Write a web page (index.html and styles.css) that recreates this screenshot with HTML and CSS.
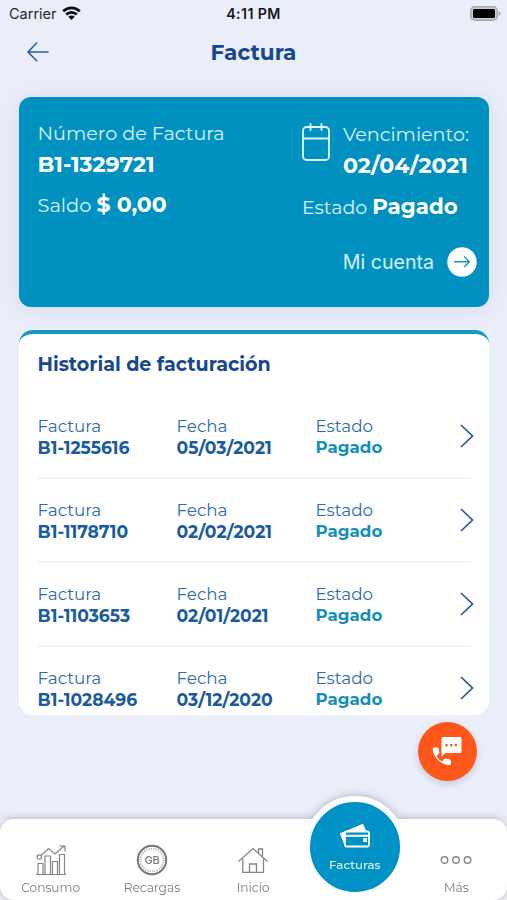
FILE: index.html
```html
<!DOCTYPE html>
<html lang="es">
<head>
  <meta charset="UTF-8">
  <meta name="viewport" content="width=device-width, initial-scale=1.0">
  <title>Factura</title>
  <link rel="stylesheet" href="styles.css">
</head>
<body>
  <div class="app">
    <div class="status-bar">
      <div class="carrier">
        <span>Carrier</span>
        <svg width="19" height="15" viewBox="0 0 19 15" fill="none" stroke="#0b0d12" stroke-width="2.7">
          <path d="M1.2 5.3a11.8 11.8 0 0 1 16.6 0"/>
          <path d="M4.2 8.5a7.5 7.5 0 0 1 10.6 0"/>
          <path d="M9.5 14 6.3 10.8a4.6 4.6 0 0 1 6.4 0z" fill="#0b0d12" stroke="none"/>
        </svg>
      </div>
      <span class="clock">4:11 PM</span>
      <svg class="battery" width="31" height="15" viewBox="0 0 31 15">
        <rect x=".8" y=".8" width="26.4" height="13.4" rx="4" fill="#c9ccd2" stroke="#a5a7ac" stroke-width="1.4"/>
        <rect x="3" y="3" width="22" height="9" rx="1.5" fill="#000"/>
        <path d="M28.6 5v5q2-.8 2-2.5T28.6 5z" fill="#a5a7ac"/>
      </svg>
    </div>

    <header class="header">
      <svg width="22" height="20" viewBox="0 0 22 20" fill="none" stroke="#2c5a9d" stroke-width="1.6" stroke-linecap="round" stroke-linejoin="round">
        <path d="M21 10H1M9.7 1 1 10l8.7 8.7"/>
      </svg>
      <h1>Factura</h1>
    </header>

    <section class="summary">
      <div class="summary-left">
        <p class="label">Número de Factura</p>
        <p class="value">B1-1329721</p>
        <p class="line balance">Saldo <b>$ 0,00</b></p>
      </div>
      <div class="summary-right">
        <div class="due">
          <svg width="28" height="38" viewBox="0 0 28 38" fill="none" stroke="#e2f6fc" stroke-width="1.8" stroke-linecap="round">
            <rect x="1" y="4" width="26" height="33" rx="3.5"/>
            <path d="M1 15.5h26M8.5 1v6M19.5 1v6"/>
          </svg>
          <div>
            <p class="label">Vencimiento:</p>
            <p class="value">02/04/2021</p>
          </div>
        </div>
        <p class="line">Estado <b>Pagado</b></p>
        <a class="account" href="#">
          <span>Mi cuenta</span>
          <svg width="30" height="30" viewBox="0 0 30 30" fill="none" stroke="#2492bd" stroke-width="1.4" stroke-linecap="round" stroke-linejoin="round">
            <circle cx="15" cy="15" r="14.7" fill="#fff" stroke="none"/>
            <path d="M7.5 14.7h15M17.7 10l4.800 4.700-4.800 4.700"/>
          </svg>
        </a>
      </div>
    </section>

    <section class="history">
      <h2>Historial de facturación</h2>
      <ul>
        <li>
          <div class="cell"><span>Factura</span><b>B1-1255616</b></div>
          <div class="cell"><span>Fecha</span><b>05/03/2021</b></div>
          <div class="cell"><span>Estado</span><b class="paid">Pagado</b></div>
          <svg class="chevron" viewBox="0 0 14 24"><path d="M1.5 1.5 12.5 12l-11 10.5"/></svg>
        </li>
        <li>
          <div class="cell"><span>Factura</span><b>B1-1178710</b></div>
          <div class="cell"><span>Fecha</span><b>02/02/2021</b></div>
          <div class="cell"><span>Estado</span><b class="paid">Pagado</b></div>
          <svg class="chevron" viewBox="0 0 14 24"><path d="M1.5 1.5 12.5 12l-11 10.5"/></svg>
        </li>
        <li>
          <div class="cell"><span>Factura</span><b>B1-1103653</b></div>
          <div class="cell"><span>Fecha</span><b>02/01/2021</b></div>
          <div class="cell"><span>Estado</span><b class="paid">Pagado</b></div>
          <svg class="chevron" viewBox="0 0 14 24"><path d="M1.5 1.5 12.5 12l-11 10.5"/></svg>
        </li>
        <li>
          <div class="cell"><span>Factura</span><b>B1-1028496</b></div>
          <div class="cell"><span>Fecha</span><b>03/12/2020</b></div>
          <div class="cell"><span>Estado</span><b class="paid">Pagado</b></div>
          <svg class="chevron" viewBox="0 0 14 24"><path d="M1.5 1.5 12.5 12l-11 10.5"/></svg>
        </li>
      </ul>
    </section>

    <button class="call-button" aria-label="Contacto">
      <svg width="30" height="30" viewBox="0 0 30 30" fill="#fff">
        <path d="M11 1h17q1.5 0 1.5 1.5v13q0 1.5-1.5 1.5H13.5L9.500 20.500V2.500Q9.500 1 11 1z"/>
        <path d="M1.7 11.5h3.800q1 0 1.200 1l.7 4q0 .8-.5 1.300L4.500 20q2 3.700 5.400 5.400l2.400-2.400q.6-.5 1.300-.4l4.300.8q1 .2 1 1.200v3.400q0 1-1 1C8.800 29 .8 21 .8 12.500q0-1 .9-1z"/>
        <g fill="#ff5a1c"><rect x="13.300" y="8" width="2.400" height="2.400"/><rect x="18" y="8" width="2.400" height="2.400"/><rect x="22.700" y="8" width="2.400" height="2.400"/></g>
      </svg>
    </button>

    <div class="tab-area">
      <nav class="tabs">
        <a class="tab" href="#">
          <svg width="32" height="32" viewBox="0 0 32 32" fill="none" stroke="#858585" stroke-width="1.2">
            <path d="M1 30.500h30M3 30V19.500h5V30M10 30V12h5.500v18M17.500 30V17.500h5V30M24.500 30V10.500h5V30"/>
            <circle cx="4.300" cy="13" r="2.200"/>
            <path d="M6 11.500 13.500 4.500l6.500 5.500 9-8M24.500 2H30v5.500"/>
          </svg>
          <span>Consumo</span>
        </a>
        <a class="tab" href="#">
          <svg width="32" height="32" viewBox="0 0 32 32" fill="none" stroke="#777">
            <circle cx="16" cy="16" r="14.200" stroke-width="2"/>
            <circle cx="16" cy="16" r="11.500" stroke="#999" stroke-width="1.600" stroke-dasharray="1 1.400"/>
            <text class="coin-text" x="16" y="20" text-anchor="middle">GB</text>
          </svg>
          <span>Recargas</span>
        </a>
        <a class="tab" href="#">
          <svg width="32" height="32" viewBox="0 0 32 32" fill="none" stroke="#858585" stroke-width="1.300">
            <path d="M1.500 17.500 16 4.500l14.500 13M5.800 15v13.300h20.700V15M12.500 28.300V20h7v8.300M21.500 9V5h4v8"/>
          </svg>
          <span>Inicio</span>
        </a>
        <a class="tab tab-active" href="#">
          <svg width="32" height="26" viewBox="0 0 32 26" fill="none" stroke="#fff" stroke-width="1.800" stroke-linejoin="round">
            <path d="M6 9 1.500 10.800 23.800 1.300l3 7.200zM1.500 10.800 6 22V9z" fill="#fff" stroke-width="1"/>
            <rect x="6" y="8.500" width="24" height="15" rx="1.500" fill="#0091c6"/>
            <path d="M6 12.800h24" stroke-width="2"/>
            <rect x="25" y="16" width="2.200" height="2.200"/>
          </svg>
          <span>Facturas</span>
        </a>
        <a class="tab" href="#">
          <svg width="32" height="32" viewBox="0 0 32 32" fill="none" stroke="#858585" stroke-width="1.400">
            <circle cx="4.500" cy="16" r="3.300"/><circle cx="16" cy="16" r="3.300"/><circle cx="27.500" cy="16" r="3.300"/>
          </svg>
          <span>Más</span>
        </a>
      </nav>
    </div>
  </div>
</body>
</html>
```
FILE: styles.css
```css
* {
  box-sizing: border-box;
}

body {
  margin: 0;
  font-family: Montserrat, Inter, "Liberation Sans", sans-serif;
  background-color: #eaeef9;
}

h1, h2, p, ul {
  margin: 0;
  padding: 0;
}

svg {
  display: block;
  flex: none;
}

a {
  text-decoration: none;
}

.app {
  position: relative;
  display: flex;
  flex-direction: column;
  height: 900px;
  overflow: hidden;
}

/* status bar */
.status-bar {
  display: grid;
  grid-template-columns: 1fr auto 1fr;
  align-items: center;
  height: 28px;
  padding: 0 6px 0 9px;
  font-family: Inter, "Liberation Sans", sans-serif;
  font-size: 14.5px;
  color: #25282e;
}

.carrier {
  display: flex;
  align-items: center;
  gap: 5px;
  margin-top: -1px;
}

.carrier svg {
  margin-top: -1px;
}

.clock {
  margin-top: -1px;
  padding-right: 3px;
  font-size: 14.2px;
  font-weight: 600;
  letter-spacing: 0.4px;
  color: #17191d;
}

.battery {
  justify-self: end;
  margin-top: -2px;
}

.header {
  display: grid;
  grid-template-columns: 54px 1fr 54px;
  align-items: center;
  height: 48px;
}

.header svg {
  margin-left: 27px;
}

.header h1 {
  text-align: center;
  font-size: 21.6px;
  font-weight: 700;
  color: #17488d;
}

/* current invoice */
.summary {
  display: flex;
  justify-content: space-between;
  flex: none;
  height: 210px;
  margin: 21px 18px 0 19px;
  padding: 25px 12px 0 18.5px;
  border-radius: 12px;
  background-color: #0091c1;
  box-shadow: 0 2px 20px rgba(90, 100, 150, 0.13);
  color: #fff;
}

.label {
  font-size: 19.15px;
  line-height: 22px;
  color: #d8f2fa;
}

.value {
  margin-top: 9px;
  font-size: 22px;
  font-weight: 700;
  line-height: 24px;
}

.line {
  margin-top: 15px;
  font-size: 19px;
  line-height: 26px;
  white-space: nowrap;
  color: #d8f2fa;
}

.line b {
  font-size: 21.4px;
  font-weight: 700;
  color: #fff;
}

.balance {
  font-size: 19.4px;
}

.balance b {
  font-size: 22px;
}

.summary-right {
  width: 175px;
}

.due {
  display: flex;
  gap: 13px;
  padding-top: 1px;
}

.account {
  display: flex;
  justify-content: flex-end;
  align-items: center;
  gap: 13px;
  margin-top: 26px;
  font-family: Inter, "Liberation Sans", sans-serif;
  font-size: 19.6px;
  color: #d8f2fa;
}

/* invoice history */
.history {
  flex: none;
  height: 385px;
  margin: 23px 18px 0 19px;
  padding: 19px 18px 0 18.5px;
  border-top: 4px solid #109ac4;
  border-radius: 14px;
  background-color: #fff;
  overflow: hidden;
}

.history h2 {
  font-size: 19.1px;
  font-weight: 700;
  line-height: 24px;
  color: #17488d;
}

.history ul {
  margin-top: 18px;
  list-style: none;
}

.history li {
  display: grid;
  grid-template-columns: 139px 139px 1fr 14px;
  height: 84px;
  padding-top: 21px;
  border-bottom: 2px solid #f3f3f5;
}

.cell {
  display: flex;
  flex-direction: column;
  font-size: 16.8px;
  line-height: 21px;
  color: #2e6caa;
}

.cell b {
  font-size: 17.2px;
  font-weight: 700;
  color: #1a5c9c;
}

.cell .paid {
  font-size: 16.7px;
  color: #138fb9;
}

.chevron {
  width: 14px;
  height: 24px;
  margin: 8px 0 0 3px;
  fill: none;
  stroke: #28569a;
  stroke-width: 1.7;
  stroke-linecap: round;
}

/* floating contact button */
.call-button {
  position: absolute;
  right: 30.5px;
  bottom: 119.5px;
  display: flex;
  align-items: center;
  justify-content: center;
  width: 59px;
  height: 59px;
  padding: 0 1px 0 0;
  border: none;
  border-radius: 50%;
  background-color: #ff561a;
  box-shadow: 0 3px 6px rgba(60, 60, 110, 0.2);
}

/* bottom tabs */
.tab-area {
  margin-top: auto;
  background-color: #f4f5f8;
}

.tabs {
  display: grid;
  grid-template-columns: repeat(5, 1fr);
  height: 81px;
  border-radius: 14px;
  background-color: #fff;
  filter: drop-shadow(0 0 4px rgba(50, 50, 80, 0.35));
}

.tab {
  display: flex;
  flex-direction: column;
  align-items: center;
  padding-top: 25px;
  font-size: 12.2px;
  color: #7d7d7d;
}

.tab span {
  margin-top: 4px;
  line-height: 16px;
}

.coin-text {
  font-family: Inter, "Liberation Sans", sans-serif;
  font-size: 11px;
  font-weight: 500;
  letter-spacing: -0.3px;
  fill: #777;
  stroke: none;
}

.tab-active {
  justify-self: center;
  width: 102px;
  height: 102px;
  margin-top: -23px;
  padding-top: 21px;
  border: 6px solid #fff;
  border-radius: 50%;
  background-color: #0091c6;
  font-size: 11.8px;
  font-weight: 500;
  color: #e9f7fc;
}

.tab-active span {
  margin-top: 8px;
}
```
